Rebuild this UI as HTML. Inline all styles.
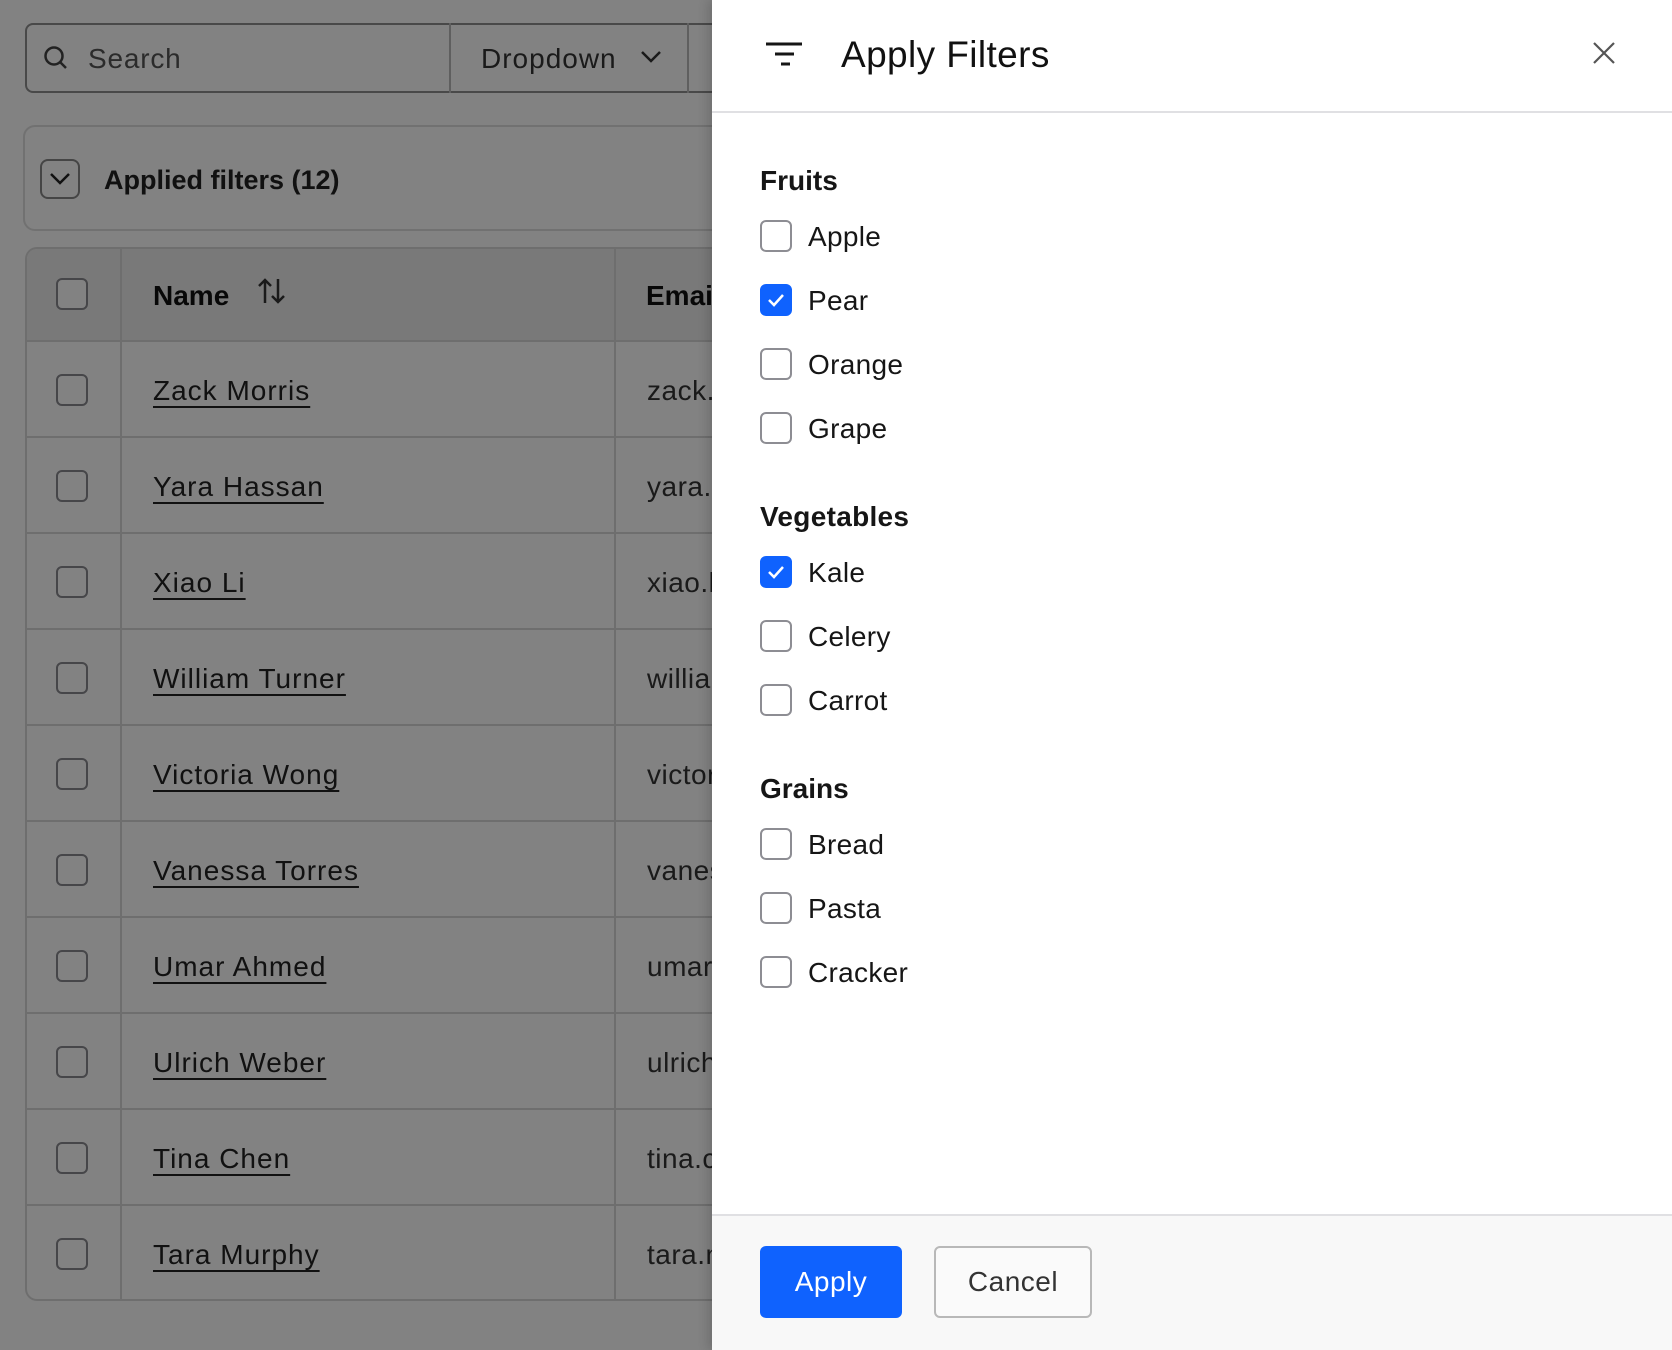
<!DOCTYPE html>
<html><head><meta charset="utf-8"><style>
*{box-sizing:border-box;margin:0;padding:0}
body{width:1672px;height:1350px;position:relative;overflow:hidden;background:#fff;font-family:"Liberation Sans",sans-serif;color:#161616}
.abs{position:absolute}
.cb{position:absolute;width:32px;height:32px;border:2px solid #8a8a8f;border-radius:6px;background:#fff}
.row{position:absolute;left:25px;width:700px;height:90px;border-top:2px solid #d8d8d8}
.name{position:absolute;left:153px;font-size:28px;letter-spacing:1px;color:#222;text-decoration:underline;text-underline-offset:6px;text-decoration-thickness:2px}
.email{position:absolute;left:647px;font-size:28px;letter-spacing:0.5px;color:#333}
#ov{position:absolute;left:0;top:0;width:712px;height:1350px;background:rgba(0,0,0,0.49)}
#panel{position:absolute;left:712px;top:0;width:960px;height:1350px;background:#fff;box-shadow:-4px 0 10px rgba(0,0,0,0.15)}
.h{position:absolute;left:48px;font-size:28px;font-weight:bold;color:#161616}
.it{position:absolute;left:48px;height:32px}
.it .b{position:absolute;left:0;top:0;width:32px;height:32px;border:2px solid #8d8d93;border-radius:6px;background:#fff}
.it .b.on{background:#0f62fe;border-color:#0f62fe}
.it span{position:absolute;left:48px;top:1px;font-size:28px;letter-spacing:0.3px;white-space:nowrap;color:#161616}
</style></head><body>
<div class="abs" style="left:25px;top:23px;width:700px;height:70px;border:2px solid #8f8f8f;border-radius:8px;border-right:none"></div>
<div class="abs" style="left:449px;top:23px;width:2px;height:70px;background:#bbb"></div>
<div class="abs" style="left:687px;top:23px;width:2px;height:70px;background:#bbb"></div>
<svg class="abs" style="left:42px;top:44px" width="28" height="28" viewBox="0 0 28 28"><circle cx="12" cy="12" r="8.5" fill="none" stroke="#444" stroke-width="2.5"/><path d="M18 18l6 6" stroke="#444" stroke-width="2.5"/></svg>
<div class="abs" style="left:88px;top:43px;font-size:28px;letter-spacing:0.8px;color:#555">Search</div>
<div class="abs" style="left:481px;top:43px;font-size:28px;letter-spacing:1px;color:#333">Dropdown</div>
<svg class="abs" style="left:640px;top:48px" width="22" height="16" viewBox="0 0 22 16"><path d="M2 4l9 9 9-9" fill="none" stroke="#333" stroke-width="2.5"/></svg>
<div class="abs" style="left:23px;top:125px;width:720px;height:106px;border:2px solid #ddd;border-radius:12px"></div>
<div class="abs" style="left:40px;top:159px;width:40px;height:40px;border:2px solid #888;border-radius:8px"></div>
<svg class="abs" style="left:48px;top:170px" width="24" height="18" viewBox="0 0 24 18"><path d="M3 4l9 9 9-9" fill="none" stroke="#222" stroke-width="2.5"/></svg>
<div class="abs" style="left:104px;top:165px;font-size:27px;font-weight:bold;color:#222">Applied filters (12)</div>
<div class="abs" style="left:25px;top:247px;width:720px;height:1054px;border:2px solid #d8d8d8;border-radius:12px 0 0 12px;border-right:none"></div>
<div class="abs" style="left:27px;top:249px;width:700px;height:92px;background:#eee;border-radius:10px 0 0 0"></div>
<div class="abs" style="left:120px;top:248px;width:2px;height:1052px;background:#d8d8d8"></div>
<div class="abs" style="left:614px;top:248px;width:2px;height:1052px;background:#d8d8d8"></div>
<div class="cb" style="left:56px;top:278px"></div>
<div class="abs" style="left:153px;top:280px;font-size:28px;font-weight:bold;color:#111">Name</div>
<svg class="abs" style="left:256px;top:277px" width="32" height="28" viewBox="0 0 32 28"><path d="M9 26V3M3 9l6-6 6 6M22 2v23M16 19l6 6 6-6" fill="none" stroke="#333" stroke-width="2.5"/></svg>
<div class="abs" style="left:646px;top:280px;font-size:28px;font-weight:bold;color:#111">Email</div>

<div class="row" style="top:340px"></div><div class="cb" style="left:56px;top:374px"></div><div class="name" style="top:375px">Zack Morris</div><div class="email" style="top:375px">zack.morris</div>
<div class="row" style="top:436px"></div><div class="cb" style="left:56px;top:470px"></div><div class="name" style="top:471px">Yara Hassan</div><div class="email" style="top:471px">yara.hassan</div>
<div class="row" style="top:532px"></div><div class="cb" style="left:56px;top:566px"></div><div class="name" style="top:567px">Xiao Li</div><div class="email" style="top:567px">xiao.li</div>
<div class="row" style="top:628px"></div><div class="cb" style="left:56px;top:662px"></div><div class="name" style="top:663px">William Turner</div><div class="email" style="top:663px">william</div>
<div class="row" style="top:724px"></div><div class="cb" style="left:56px;top:758px"></div><div class="name" style="top:759px">Victoria Wong</div><div class="email" style="top:759px">victoria</div>
<div class="row" style="top:820px"></div><div class="cb" style="left:56px;top:854px"></div><div class="name" style="top:855px">Vanessa Torres</div><div class="email" style="top:855px">vanessa</div>
<div class="row" style="top:916px"></div><div class="cb" style="left:56px;top:950px"></div><div class="name" style="top:951px">Umar Ahmed</div><div class="email" style="top:951px">umar</div>
<div class="row" style="top:1012px"></div><div class="cb" style="left:56px;top:1046px"></div><div class="name" style="top:1047px">Ulrich Weber</div><div class="email" style="top:1047px">ulrich</div>
<div class="row" style="top:1108px"></div><div class="cb" style="left:56px;top:1142px"></div><div class="name" style="top:1143px">Tina Chen</div><div class="email" style="top:1143px">tina.chen</div>
<div class="row" style="top:1204px"></div><div class="cb" style="left:56px;top:1238px"></div><div class="name" style="top:1239px">Tara Murphy</div><div class="email" style="top:1239px">tara.murphy</div>
<div id="ov"></div>

<div id="panel">
 <svg class="abs" style="left:54px;top:42px" width="38" height="26" viewBox="0 0 38 26"><path d="M0 2h36M9 12h19M15 22h9" stroke="#161616" stroke-width="3"/></svg>
 <div class="abs" style="left:129px;top:34px;font-size:37px;letter-spacing:0.4px;color:#111">Apply Filters</div>
 <svg class="abs" style="left:881px;top:42px" width="22" height="22" viewBox="0 0 22 22"><path d="M1 1l20 20M21 1L1 21" stroke="#555" stroke-width="2.2"/></svg>
 <div class="abs" style="left:0;top:111px;width:960px;height:2px;background:#e0e0e3"></div>
 <div class="h" style="top:165px">Fruits</div>
 <div class="it" style="top:220px"><div class="b"></div><span>Apple</span></div>
 <div class="it" style="top:284px"><div class="b on"><svg width="28" height="28" viewBox="0 0 28 28"><path d="M7 14l5 5 9-10" fill="none" stroke="#fff" stroke-width="2.5"/></svg></div><span>Pear</span></div>
 <div class="it" style="top:348px"><div class="b"></div><span>Orange</span></div>
 <div class="it" style="top:412px"><div class="b"></div><span>Grape</span></div>
 <div class="h" style="top:501px;letter-spacing:0.3px">Vegetables</div>
 <div class="it" style="top:556px"><div class="b on"><svg width="28" height="28" viewBox="0 0 28 28"><path d="M7 14l5 5 9-10" fill="none" stroke="#fff" stroke-width="2.5"/></svg></div><span>Kale</span></div>
 <div class="it" style="top:620px"><div class="b"></div><span>Celery</span></div>
 <div class="it" style="top:684px"><div class="b"></div><span>Carrot</span></div>
 <div class="h" style="top:773px">Grains</div>
 <div class="it" style="top:828px"><div class="b"></div><span>Bread</span></div>
 <div class="it" style="top:892px"><div class="b"></div><span>Pasta</span></div>
 <div class="it" style="top:956px"><div class="b"></div><span>Cracker</span></div>
 <div class="abs" style="left:0;top:1214px;width:960px;height:136px;background:#f8f8f8;border-top:2px solid #e0e0e3"></div>
 <div class="abs" style="left:48px;top:1246px;width:142px;height:72px;background:#0f62fe;border-radius:6px;color:#fff;font-size:28px;letter-spacing:0.5px;text-align:center;line-height:72px">Apply</div>
 <div class="abs" style="left:222px;top:1246px;width:158px;height:72px;border:2px solid #b8b8b8;border-radius:6px;background:#fafafa;color:#333;font-size:28px;letter-spacing:0.5px;text-align:center;line-height:68px">Cancel</div>
</div>
</body></html>
